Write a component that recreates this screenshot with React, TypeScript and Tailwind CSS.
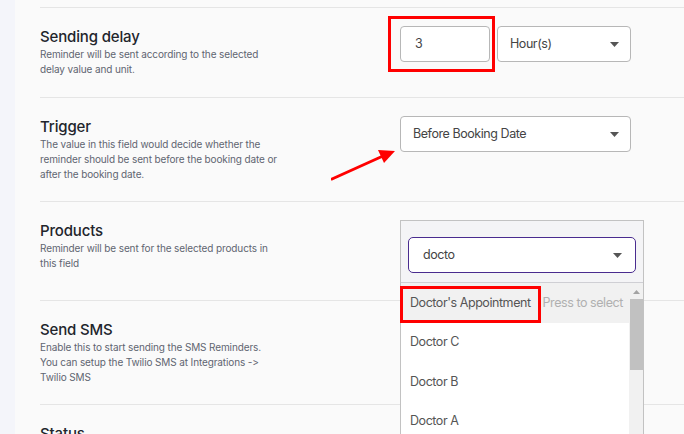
import React from "react";

function Caret() {
  return (
    <svg width="9" height="5" viewBox="0 0 9 5" className="shrink-0">
      <path d="M0 0h9L4.5 5z" fill="#555" />
    </svg>
  );
}

function Select({ value, className }: { value: string; className: string }) {
  return (
    <div
      className={`flex h-9 items-center justify-between rounded-[4px] border border-[#b7b7b7] bg-white pl-3 pr-[11px] text-[12.5px] tracking-[-0.035em] text-[#444] ${className}`}
    >
      <span className="whitespace-nowrap">{value}</span>
      <Caret />
    </div>
  );
}

interface RowProps {
  title: string;
  lines: string[];
  extraBottom?: string;
  children?: React.ReactNode;
}

function Row({ title, lines, extraBottom = "pb-5", children }: RowProps) {
  return (
    <div className="flex border-t border-[#e5e5e5]">
      <div className={`w-[360px] shrink-0 pt-[19px] ${extraBottom}`}>
        <h3 className="text-[15px] font-medium leading-5 tracking-[-0.01em] text-[#22252c]">
          {title}
        </h3>
        <p className="text-[10px] leading-[15px] tracking-[-0.012em] text-[#5f6571]">
          {lines.map((l) => (
            <span key={l} className="block whitespace-nowrap">
              {l}
            </span>
          ))}
        </p>
      </div>
      <div className="relative flex-1 pt-[18px]">{children}</div>
    </div>
  );
}

const options = ["Doctor C", "Doctor B", "Doctor A"];

export default function App() {
  return (
    <div className="flex h-[434px] w-[684px] overflow-hidden bg-[#f4f5fa] font-['Inter',sans-serif]">
      <div className="w-[15px] shrink-0" />
      <div className="relative flex-1 bg-[#fafafa] pl-[25px] pt-[7px]">
        {/* Sending delay */}
        <Row
          title="Sending delay"
          lines={[
            "Reminder will be sent according to the selected",
            "delay value and unit.",
          ]}
        >
          <div className="flex gap-[7px]">
            <div className="relative">
              <div className="flex h-9 w-[90px] items-center rounded-[4px] border border-[#b7b7b7] bg-white pl-[14px] text-[12.5px] text-[#444]">
                3
              </div>
              <div className="absolute left-[-12px] top-[-10px] h-[56px] w-[107px] border-[3px] border-[#ff0000]" />
            </div>
            <Select value="Hour(s)" className="w-[134px]" />
          </div>
        </Row>

        {/* Trigger */}
        <Row
          title="Trigger"
          lines={[
            "The value in this field would decide whether the",
            "reminder should be sent before the booking date or",
            "after the booking date.",
          ]}
          extraBottom="pb-[19px]"
        >
          <Select value="Before Booking Date" className="w-[231px]" />
          <svg
            width="70"
            height="34"
            viewBox="0 0 70 34"
            className="absolute left-[-69px] top-[49px]"
          >
            <line x1="1" y1="32" x2="52" y2="9" stroke="#ff0000" strokeWidth="3" strokeLinecap="round" />
            <path d="M64 4L47 3L53 16z" fill="#ff0000" />
          </svg>
        </Row>

        {/* Products */}
        <Row
          title="Products"
          lines={[
            "Reminder will be sent for the selected products in",
            "this field",
          ]}
          extraBottom="pb-[29px]"
        >
          <div className="absolute left-0 top-[18px] z-10 h-[240px] w-[244px] border border-[#c2c2c2] bg-[#f4f4f6]">
            <div className="border-b border-[#cfcfd4] px-[7px] pb-[9px] pt-4">
              <div className="flex h-9 items-center justify-between rounded-[5px] border-[1.5px] border-[#4a2c8f] bg-white pl-[14px] pr-[13px] text-[12.5px] tracking-[-0.035em] text-[#444]">
                <span>docto</span>
                <Caret />
              </div>
            </div>
            <div className="flex">
              <div className="flex-1 whitespace-nowrap bg-white text-[12.5px] tracking-[-0.035em] text-[#555]">
                <div className="relative flex h-10 items-center bg-[#f1f1f1] pl-[9px]">
                  <span>Doctor's Appointment</span>
                  <span className="ml-[12px] text-[#b0b0b0]">Press to select</span>
                  <div className="absolute left-[-1px] top-[3px] h-[37px] w-[141px] border-[3px] border-[#ff0000]" />
                </div>
                {options.map((o) => (
                  <div key={o} className="flex h-[39.5px] items-center pl-[9px]">
                    {o}
                  </div>
                ))}
              </div>
              <div className="flex w-[14px] flex-col items-center bg-[#f1f1f1]">
                <svg width="7" height="4" viewBox="0 0 7 4" className="mt-[7px]">
                  <path d="M3.5 0L7 4H0z" fill="#a3a3a3" />
                </svg>
                <div className="mt-[5px] h-[71px] w-[13px] bg-[#c1c1c1]" />
              </div>
            </div>
          </div>
        </Row>

        {/* Send SMS */}
        <Row
          title="Send SMS"
          lines={[
            "Enable this to start sending the SMS Reminders.",
            "You can setup the Twilio SMS at Integrations ->",
            "Twilio SMS",
          ]}
          extraBottom="pb-[19px]"
        />

        {/* Status */}
        <Row title="Status" lines={["Set the status of this reminder."]} />
      </div>
    </div>
  );
}
